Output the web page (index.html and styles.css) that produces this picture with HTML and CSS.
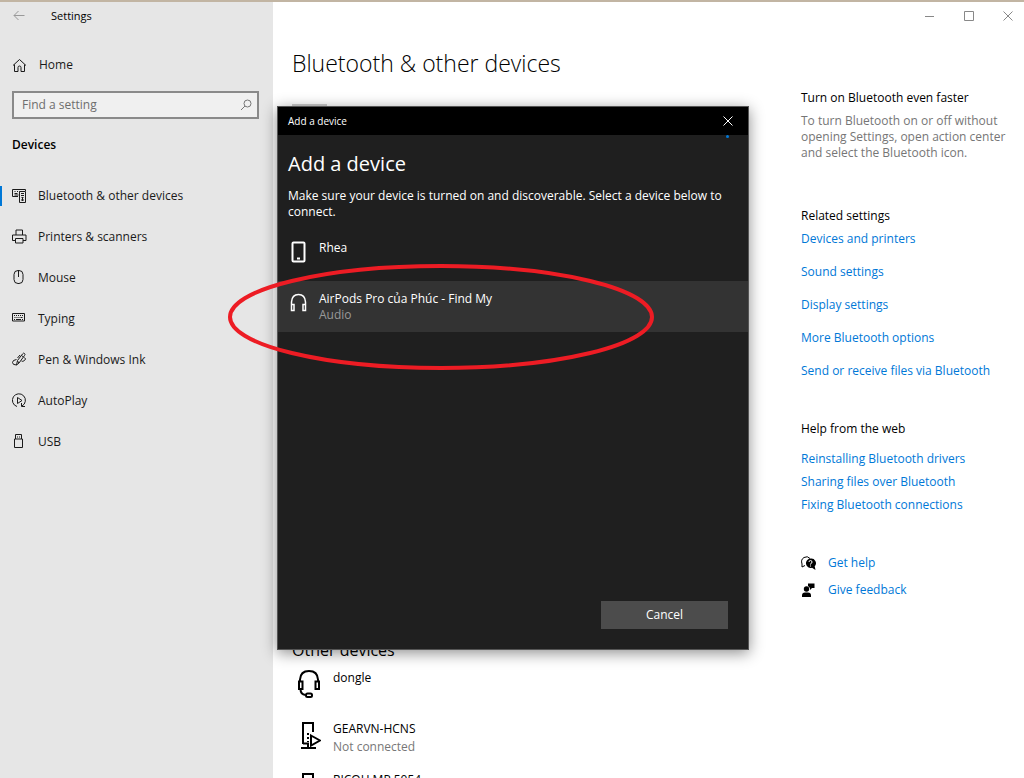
FILE: index.html
```html
<!DOCTYPE html>
<html lang="en">
<head>
    <meta charset="UTF-8">
    <meta name="viewport" content="width=device-width, initial-scale=1.0">
    <title>Settings</title>
    <link rel="stylesheet" href="styles.css">
</head>
<body>
    <div class="window">
        <div class="sidebar">
            <div class="title-bar">
                <button class="back-button" aria-label="Back">
                    <svg width="12" height="12" viewBox="0 0 12 12"><path d="M11.5 5.500H1M5.500 1L1 5.500l4.500 4.500"/></svg>
                </button>
                <span>Settings</span>
            </div>
            <a class="home-link" href="#">
                <svg class="icon" width="15" height="15" viewBox="0 0 15 15"><path d="M1 7.500L7.500 1.500L14 7.500M2.500 6.500v7h3.500V9.500q0-1.500 1.500-1.500t1.500 1.500v4h3.500v-7"/></svg>
                <span>Home</span>
            </a>
            <div class="search">
                <input type="text" placeholder="Find a setting" aria-label="Find a setting">
                <svg width="12" height="12" viewBox="0 0 12 12"><circle cx="7.500" cy="4.500" r="3.500"/><path d="M5 7L1 11"/></svg>
            </div>
            <h2>Devices</h2>
            <nav>
                <a class="active" href="#">
                    <svg class="icon" width="15" height="15" viewBox="0 0 15 15"><path d="M6 8.500H.5v-7h13V3M2.500 3.500h1M5 3.500h1M7.500 3.500h1M10 3.500h1M2.500 5.500h3M2.500 7h4M7.500 3.500h6v11h-6zM9 5.500h3M9 7.500h3M9.500 9.500h2M10.500 9v4M9 12h3"/></svg>
                    <span>Bluetooth &amp; other devices</span>
                </a>
                <a href="#">
                    <svg class="icon" width="15" height="15" viewBox="0 0 15 15"><path d="M4 6V1h6.500v5M3.500 11.500h-3V6h13.500v5.500h-3M3.500 9.500h7.500v4.500H3.500z"/></svg>
                    <span>Printers &amp; scanners</span>
                </a>
                <a href="#">
                    <svg class="icon" width="15" height="15" viewBox="0 0 15 15"><rect x="2" y=".5" width="9" height="13" rx="4"/><path d="M6.500 1v6"/></svg>
                    <span>Mouse</span>
                </a>
                <a href="#">
                    <svg class="icon" width="15" height="15" viewBox="0 0 15 15"><path d="M.5 2.500h12v7.500H.5zM2 4.500h1M4 4.500h1M6 4.500h1M8 4.500h1M10 4.500h1M2.500 6.500h1M4.500 6.500h1M6.500 6.500h1M8.500 6.500h2M2 8.500h1M4 8.500h5M10 8.500h1"/></svg>
                    <span>Typing</span>
                </a>
                <a href="#">
                    <svg class="icon" width="15" height="15" viewBox="0 0 15 15"><path d="M4.500 13l1-4.500L10.500 2q1-1.500 2-.5t0 2L7 11zM5.500 9l1.500 2M9.500 3.500l2 1.500M8 3L5.500 6M4.500 7.500Q.5 8 .5 10.500T4.500 13M9.500 9q1 1 3-.5t0-3"/></svg>
                    <span>Pen &amp; Windows Ink</span>
                </a>
                <a href="#">
                    <svg class="icon" width="15" height="15" viewBox="0 0 15 15"><path d="M5 13.500A6.500 6.500 0 1 1 10 13M5.500 4.500v6l4.500-3zM9.500 10v3.500H13"/></svg>
                    <span>AutoPlay</span>
                </a>
                <a href="#">
                    <svg class="icon" width="15" height="15" viewBox="0 0 15 15"><path d="M2.500 5h8v8.500h-8zM3.500 5V.5h6V5M5 3h1M7 3h1"/></svg>
                    <span>USB</span>
                </a>
            </nav>
        </div>

        <div class="page">
            <div class="window-controls">
                <button aria-label="Minimize"><svg width="10" height="10" viewBox="0 0 10 10"><path d="M0 5.500h9"/></svg></button>
                <button aria-label="Maximize"><svg width="10" height="10" viewBox="0 0 10 10"><path d="M.5 .5h9v9h-9z"/></svg></button>
                <button aria-label="Close"><svg width="10" height="10" viewBox="0 0 10 10"><path d="M.5 .5l9 9M9.500 .5l-9 9"/></svg></button>
            </div>
            <div class="columns">
                <main>
                    <h1>Bluetooth &amp; other devices</h1>
                    <div class="add-tile"></div>
                    <h2>Other devices</h2>
                    <ul class="devices">
                        <li>
                            <svg width="24" height="30" viewBox="0 0 24 30"><path d="M3 13V10.500Q3.500 2 12 2T21 10.500V13M2 12.500h3.500v7.500H2zM18.500 12.500H22v7.500h-3.500zM3.500 20q0 5.500 5 6"/><rect x="9" y="24.500" width="6" height="3.500" rx="1.500"/></svg>
                            <div>
                                <p>dongle</p>
                            </div>
                        </li>
                        <li>
                            <svg width="24" height="30" viewBox="0 0 24 30"><path d="M16 12V3H6v21M4 28h15M11 24v4M6 23.500h6M14 15.500l9 5-9 5z"/><path stroke-dasharray="2 2" d="M11 13v9"/></svg>
                            <div>
                                <p>GEARVN-HCNS</p>
                                <p class="status">Not connected</p>
                            </div>
                        </li>
                        <li>
                            <svg width="24" height="30" viewBox="0 0 24 30"><path d="M16 12V3H6v21M4 28h15"/></svg>
                            <div>
                                <p>RICOH MP 5054</p>
                            </div>
                        </li>
                    </ul>
                </main>

                <aside>
                    <section class="tip">
                        <h3>Turn on Bluetooth even faster</h3>
                        <p>To turn Bluetooth on or off without opening Settings, open action center and select the Bluetooth icon.</p>
                    </section>
                    <section class="related">
                        <h3>Related settings</h3>
                        <a href="#">Devices and printers</a>
                        <a href="#">Sound settings</a>
                        <a href="#">Display settings</a>
                        <a href="#">More Bluetooth options</a>
                        <a href="#">Send or receive files via Bluetooth</a>
                    </section>
                    <section class="web-help">
                        <h3>Help from the web</h3>
                        <a href="#">Reinstalling Bluetooth drivers</a>
                        <a href="#">Sharing files over Bluetooth</a>
                        <a href="#">Fixing Bluetooth connections</a>
                    </section>
                    <section class="support">
                        <a href="#">
                            <svg width="15" height="15" viewBox="0 0 15 15"><path fill="none" stroke="#000" d="M4 9.500L1 11V8Q-.5 3.500 3 1.500T9 2.500"/><path d="M9.500 2.500a4.700 4.700 0 1 0 1.500 9.200L14.500 14l-.8-3.700A4.700 4.700 0 0 0 9.500 2.500z"/><path fill="none" stroke="#fff" d="M8 6q0-1.500 1.500-1.500T11 6T9.500 7.800V8.500M9.500 9.500v1"/></svg>
                            <span>Get help</span>
                        </a>
                        <a href="#">
                            <svg width="15" height="15" viewBox="0 0 15 15"><circle cx="5.500" cy="6" r="2.700"/><path d="M1 14v-1.500q0-3 3-3h3q3 0 3 3v1.500zM7 .5h6.500V5H11L9 7V5L7 3z"/></svg>
                            <span>Give feedback</span>
                        </a>
                    </section>
                </aside>
            </div>
        </div>
    </div>

    <div class="dialog" role="dialog" aria-labelledby="dialog-title">
        <div class="dialog-bar">
            <span>Add a device</span>
            <button class="dialog-close" aria-label="Close dialog"><svg width="10" height="10" viewBox="0 0 10 10"><path d="M.5 .5l9 9M9.500 .5l-9 9"/></svg></button>
        </div>
        <div class="progress"></div>
        <div class="dialog-intro">
            <h2 id="dialog-title">Add a device</h2>
            <p>Make sure your device is turned on and discoverable. Select a device below to connect.</p>
        </div>
        <ul class="found">
            <li>
                <svg width="20" height="24" viewBox="0 0 20 24"><rect x="3.500" y="2.500" width="12" height="19" rx="1"/><path d="M8 18.500h3"/></svg>
                <div>
                    <p>Rhea</p>
                </div>
            </li>
            <li class="selected">
                <svg width="20" height="24" viewBox="0 0 20 24"><path d="M2.500 19V11Q3 3.500 9.500 3.500T16.500 11V19M2.500 13.500h2.500v6H2.500zM14 13.500h2.500v6H14z"/></svg>
                <div>
                    <p>AirPods Pro của Phúc - Find My</p>
                    <p class="status">Audio</p>
                </div>
            </li>
        </ul>
        <div class="dialog-actions">
            <button class="cancel-button">Cancel</button>
        </div>
        <svg class="highlight" width="426" height="106" viewBox="0 0 426 106"><ellipse cx="213" cy="53" rx="211" ry="51"/></svg>
    </div>
</body>
</html>
```

FILE: styles.css
```css
* {
    box-sizing: border-box;
}

body {
    margin: 0;
    height: 100vh;
    overflow: hidden;
    position: relative;
    font-family: "Open Sans", "Noto Sans", sans-serif;
    font-size: 12px;
    line-height: 16px;
    color: #1a1a1a;
    background-color: #fff;
}

h1, h2, h3, p, ul {
    margin: 0;
    padding: 0;
    font-weight: 400;
}

ul {
    list-style: none;
}

a {
    color: #0078d7;
    text-decoration: none;
}

button {
    padding: 0;
    border: none;
    background: none;
    font: inherit;
    color: inherit;
}

svg {
    display: block;
    flex: none;
    fill: none;
    stroke: currentColor;
}

.window {
    display: flex;
    height: 100%;
    border-top: 2px solid #c2b5a3;
}

/* sidebar */
.sidebar {
    flex: none;
    width: 273px;
    background-color: #e6e6e6;
}

.title-bar {
    display: flex;
    align-items: center;
    gap: 26px;
    height: 28px;
    padding-left: 13px;
    font-size: 11px;
    color: #000;
}

.back-button {
    color: #999;
}

.home-link {
    display: flex;
    align-items: center;
    gap: 12px;
    height: 40px;
    margin-top: 15px;
    padding-left: 12px;
    color: #1a1a1a;
}

.search {
    display: flex;
    align-items: center;
    height: 28px;
    margin: 6px 14px 0 12px;
    padding-right: 5px;
    border: 2px solid #8a8a8a;
    background-color: #f0f0f0;
    color: #777;
}

.search input {
    flex: 1;
    min-width: 0;
    padding: 0 8px;
    border: none;
    outline: none;
    background: none;
    font: inherit;
}

.search input::placeholder {
    color: #6e6e6e;
    opacity: 1;
}

.sidebar h2 {
    margin: 18px 0 22px 12px;
    font-size: 12px;
    font-weight: 600;
    color: #000;
}

nav a {
    display: flex;
    align-items: center;
    height: 41px;
    gap: 11px;
    padding-left: 12px;
    color: #1a1a1a;
}

nav a.active {
    background: linear-gradient(#0078d7, #0078d7) left center / 2px 20px no-repeat;
}

/* page */
.page {
    flex: 1;
    min-width: 0;
}

.window-controls {
    display: flex;
    justify-content: flex-end;
    align-items: center;
    gap: 29px;
    height: 28px;
    padding-right: 11px;
    color: #888;
}

.columns {
    display: flex;
    justify-content: space-between;
}

main {
    flex: 1;
    padding: 17px 0 0 19px;
}

h1 {
    font-size: 23px;
    font-weight: 300;
    line-height: 32px;
    color: #000;
}

.add-tile {
    width: 35px;
    height: 35px;
    margin: 25px 0 500px;
    background-color: #ccc;
}

main h2 {
    font-size: 16px;
    line-height: 22px;
    color: #000;
}

.devices {
    padding-left: 5px;
}

.devices li {
    display: flex;
    gap: 12px;
    min-height: 51px;
    padding-top: 8px;
    color: #000;
}

.devices p {
    line-height: 18px;
}

.devices .status {
    color: #777;
}

aside {
    flex: none;
    width: 223px;
    padding: 60px 12px 0 0;
}

aside h3 {
    font-size: 12px;
    color: #000;
}

.tip p {
    margin-top: 7px;
    color: #767676;
}

.related,
.web-help,
.support {
    display: flex;
    flex-direction: column;
    align-items: flex-start;
}

.related {
    gap: 17px;
    margin-top: 47px;
}

.related h3 {
    margin-bottom: -10px;
}

.web-help {
    gap: 7px;
    margin-top: 42px;
}

.web-help h3 {
    margin-bottom: 7px;
}

.support {
    gap: 11px;
    margin-top: 42px;
}

.support a {
    display: flex;
    align-items: center;
    gap: 12px;
}

.support svg {
    fill: #000;
    stroke: none;
}

/* dialog */
.dialog {
    position: absolute;
    top: 106px;
    left: 277px;
    width: 472px;
    height: 544px;
    display: flex;
    flex-direction: column;
    border: 1px solid #555;
    background-color: #1f1f1f;
    color: #fff;
    box-shadow: 0 3px 14px rgba(0, 0, 0, 0.45);
}

.dialog-bar {
    display: flex;
    justify-content: space-between;
    align-items: center;
    height: 28px;
    padding: 0 15px 0 10px;
    background-color: #000;
    font-size: 10px;
}

.progress {
    width: 3px;
    height: 3px;
    margin-left: 448px;
    border-radius: 50%;
    background-color: #0078d7;
}

.dialog-intro {
    padding: 12px 20px 0 10px;
}

.dialog h2 {
    font-size: 20px;
    line-height: 28px;
}

.dialog-intro p {
    margin-top: 10px;
}

.found {
    flex: 1;
    margin-top: 10px;
}

.found li {
    display: flex;
    gap: 10px;
    height: 51px;
    padding: 10px 11px 0;
}

.found .selected {
    background-color: #333;
}

.found svg,
.devices svg {
    stroke-width: 2;
}

.found .selected svg {
    stroke-width: 1.5;
}

.found .status {
    color: #999;
}

.dialog-actions {
    display: flex;
    justify-content: flex-end;
    padding: 0 20px 20px;
}

.cancel-button {
    width: 127px;
    height: 28px;
    background-color: #4c4c4c;
}

.highlight {
    position: absolute;
    top: 157px;
    left: -50px;
    stroke: #ed1c24;
    stroke-width: 4;
    pointer-events: none;
}
```
